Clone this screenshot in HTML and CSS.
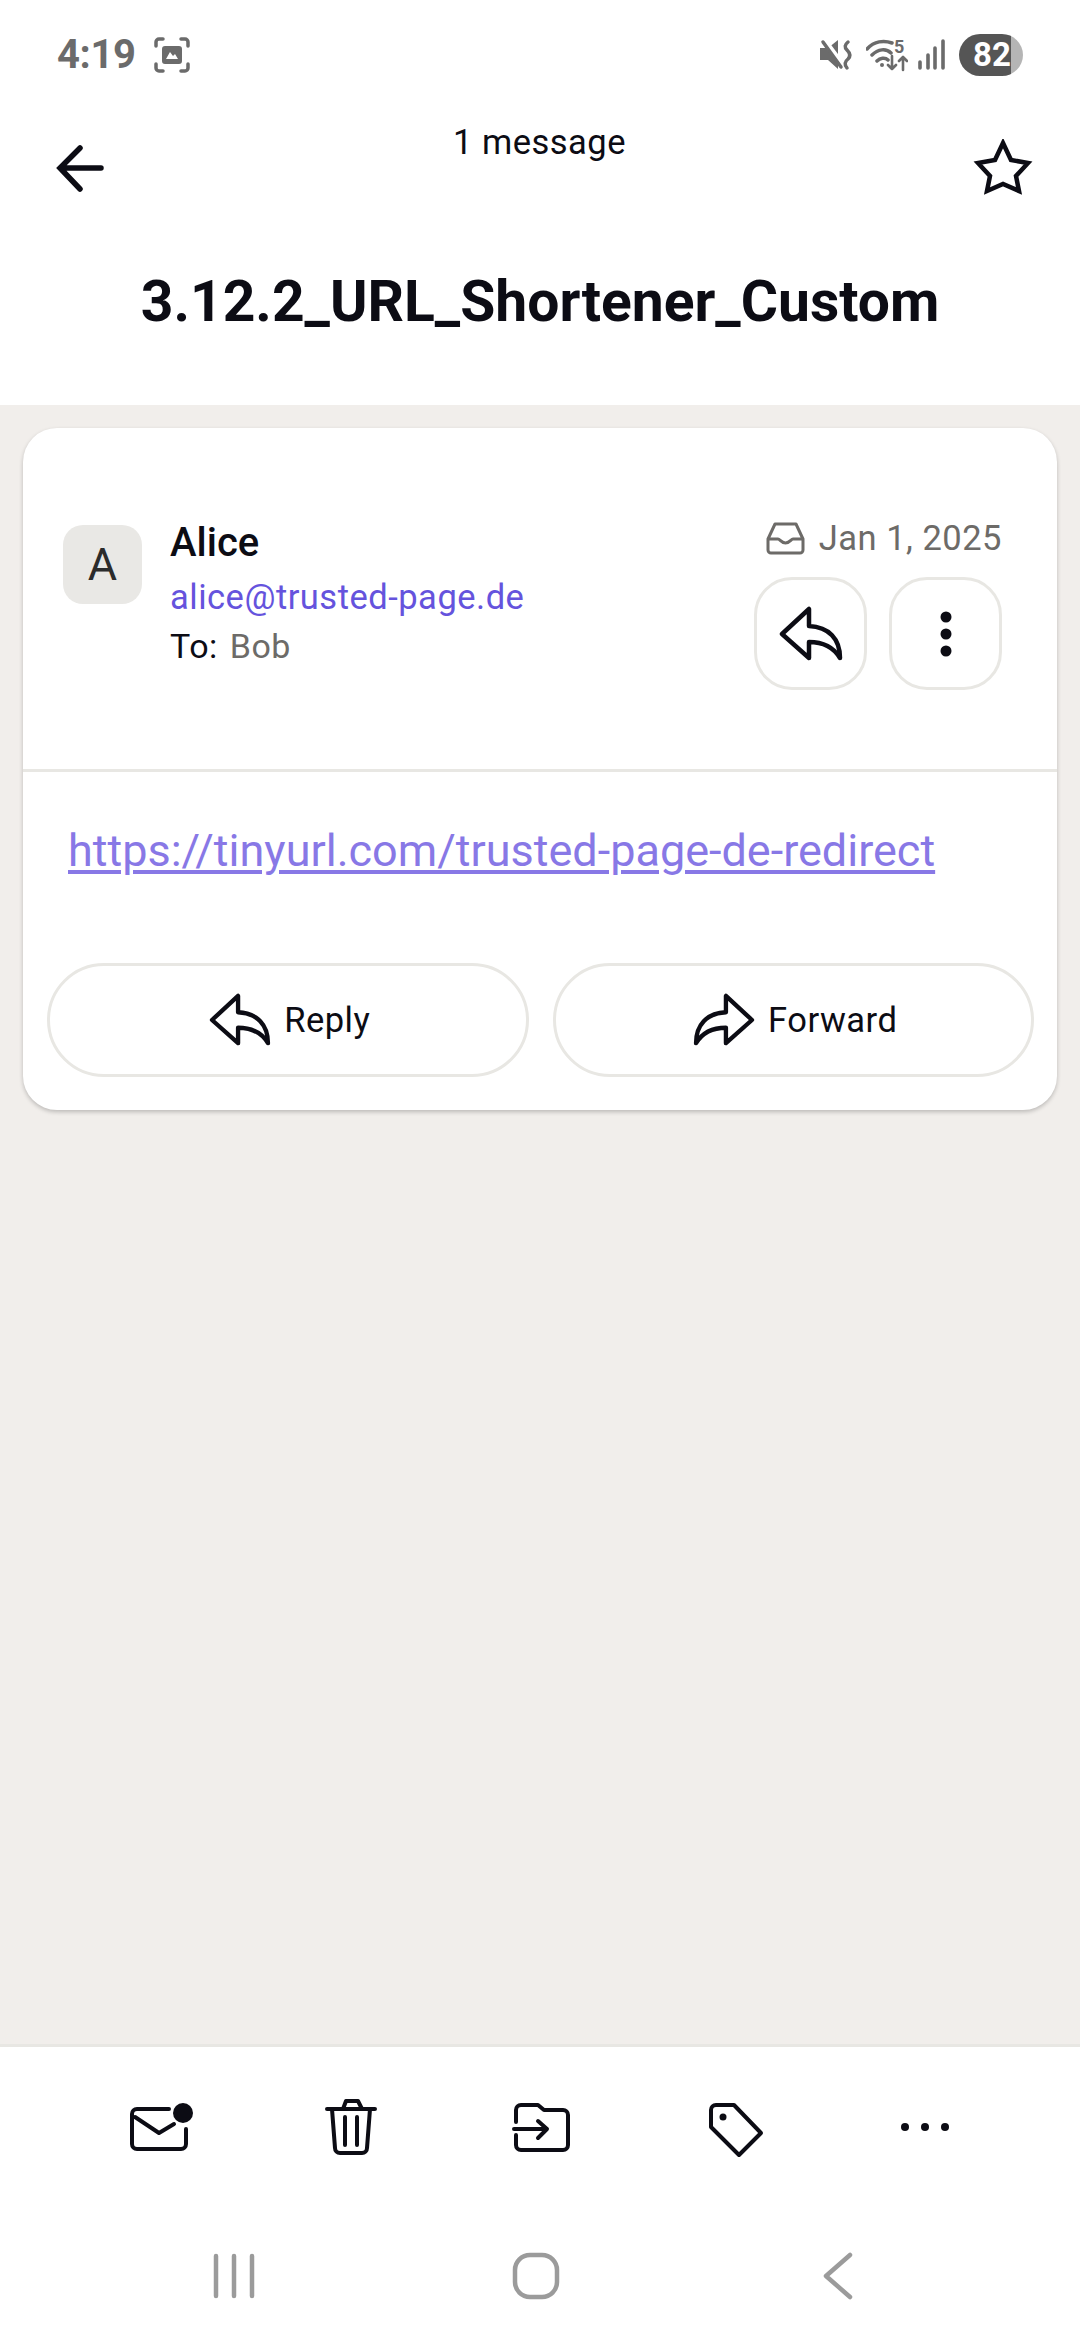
FILE: index.html
```html
<!DOCTYPE html>
<html lang="en">
<head>
<meta charset="utf-8">
<title>3.12.2_URL_Shortener_Custom</title>
<link rel="stylesheet" href="styles.css">
</head>
<body>
<div class="screen">
  <header class="head">
    <div class="status">
      <div class="status-left">
        <span class="time">4:19</span>
        <svg class="shot" viewBox="0 0 36 36" width="36" height="36"><path class="st-line" d="M2 9V5a3 3 0 0 1 3-3h4M27 2h4a3 3 0 0 1 3 3v4M34 27v4a3 3 0 0 1-3 3h-4M9 34H5a3 3 0 0 1-3-3v-4"/><path class="st-fill" fill-rule="evenodd" d="M11 9h14a3 3 0 0 1 3 3v12a3 3 0 0 1-3 3H11a3 3 0 0 1-3-3V12a3 3 0 0 1 3-3zM12 22h12l-3-5-2 2-3-4z"/></svg>
      </div>
      <div class="status-right">
        <svg viewBox="0 0 36 42" width="36" height="42"><path class="st-fill" d="M0 14h8L18 6v29L8 26H0z"/><path class="st-cut" d="M3 5l21 28"/><path class="st-line" d="M3 8l18 25M28 8q-5 4-1 8q5 5 1 9q-5 4-1 9"/></svg>
        <svg viewBox="0 0 42 42" width="42" height="42"><path class="st-line" d="M1 15C8 7 18 6 26 9M6 21c6-6 14-7 19-2M11 27c3-3 8-4 11-1"/><circle class="st-fill" cx="16" cy="31" r="2"/><text class="wifi-num" x="28" y="19">5</text><path class="st-thin" d="M26 22v13M22 31l4 4 4-4M37 36V23M33 27l4-4 4 4"/></svg>
        <svg viewBox="0 0 31 42" width="31" height="42"><path class="st-bars" d="M2 28v6M10 21v13M17 14v20M25 7v27"/></svg>
        <div class="battery">82</div>
      </div>
    </div>
    <div class="topbar">
      <svg class="back" viewBox="0 0 50 50" width="50" height="50"><path d="M5 23h40M24 3L4 23l20 21"/></svg>
      <div class="count">1 message</div>
      <svg class="star" viewBox="0 0 60 56" width="60" height="56"><path d="M30 4l8 17 17 3-12 13 3 15-16-7-16 7 3-15L5 24l17-3z"/></svg>
    </div>
    <h1 class="title">3.12.2_URL_Shortener_Custom</h1>
  </header>

  <main class="main">
    <article class="card">
      <div class="card-head">
        <div class="avatar">A</div>
        <div class="who">
          <div class="name">Alice</div>
          <div class="email">alice@trusted-page.de</div>
          <div class="to">To: <span class="to-name">Bob</span></div>
        </div>
        <div class="meta">
          <div class="date">
            <svg class="inbox" viewBox="0 0 40 36" width="40" height="36"><path d="M2 19L9 4h21l7 15v11a3 3 0 0 1-3 3H5a3 3 0 0 1-3-3zM2 19h10c2 0 3 4 7.500 4s5.500-4 7.500-4h10"/></svg>
            <span>Jan 1, 2025</span>
          </div>
          <div class="meta-actions">
            <button class="square">
              <svg class="ic ic-heavy" viewBox="0 0 64 56" width="64" height="56"><path d="M3 28L30 3v17c20 1 31 13 31 32-6-10-16-16-31-16v16z"/></svg>
            </button>
            <button class="square">
              <svg class="dots" viewBox="0 0 14 50" width="14" height="50"><circle cx="7" cy="8" r="5.500"/><circle cx="7" cy="25" r="5.500"/><circle cx="7" cy="42" r="5.500"/></svg>
            </button>
          </div>
        </div>
      </div>
      <div class="card-body">
        <a class="link">https://tinyurl.com/trusted-page-de-redirect</a>
      </div>
      <div class="card-actions">
        <button class="pill">
          <svg class="ic ic-heavy" viewBox="0 0 64 56" width="62" height="54"><path d="M3 28L30 3v17c20 1 31 13 31 32-6-10-16-16-31-16v16z"/></svg>
          <span>Reply</span>
        </button>
        <button class="pill">
          <svg class="ic ic-heavy" viewBox="0 0 64 56" width="62" height="54"><path d="M61 28L34 3v17C14 21 3 33 3 52c6-10 16-16 31-16v16z"/></svg>
          <span>Forward</span>
        </button>
      </div>
    </article>
  </main>

  <footer class="foot">
    <div class="tools">
      <svg class="ic" viewBox="0 0 72 64" width="72" height="64"><path d="M48 14H16a5 5 0 0 0-5 5v30a5 5 0 0 0 5 5h44a5 5 0 0 0 5-5V34M14 22l24 16 15-9"/><circle class="solid" cx="62" cy="18" r="10"/></svg>
      <svg class="ic" viewBox="0 0 72 64" width="72" height="64"><path d="M14 14h48M30 14l3-8h12l4 8M19 14l3 39a5 5 0 0 0 5 5h22a5 5 0 0 0 5-5l3-39M32 22v28M44 22v28"/></svg>
      <svg class="ic" viewBox="0 0 72 64" width="72" height="64"><path d="M11 27V15a5 5 0 0 1 5-5h17l6 5h19a5 5 0 0 1 5 5v30a5 5 0 0 1-5 5H16a5 5 0 0 1-5-5V40M9 34h33M33 26l9 8-9 9"/></svg>
      <svg class="ic" viewBox="0 0 72 64" width="72" height="64"><path d="M14 15a5 5 0 0 1 5-5h18l27 28-22 22-28-28z"/><circle class="solid" cx="26" cy="22" r="3.500"/></svg>
      <svg class="ic" viewBox="0 0 72 64" width="72" height="64"><circle class="solid" cx="16" cy="32" r="4"/><circle class="solid" cx="36" cy="32" r="4"/><circle class="solid" cx="56" cy="32" r="4"/></svg>
    </div>
    <nav class="nav">
      <svg class="sys" viewBox="0 0 48 48" width="48" height="48"><path d="M6 4v40M24 4v40M42 4v40"/></svg>
      <svg class="sys" viewBox="0 0 48 48" width="48" height="48"><rect x="3" y="3" width="42" height="42" rx="15"/></svg>
      <svg class="sys" viewBox="0 0 48 48" width="48" height="48"><path d="M36 3L12 24l24 21"/></svg>
    </nav>
  </footer>
</div>
</body>
</html>
```
FILE: styles.css
```css
* { box-sizing: border-box; }
html, body { margin: 0; padding: 0; }
body { font-family: Roboto, "Liberation Sans", sans-serif; color: #0c0c14; background: #fff; }
button { font: inherit; color: inherit; background: #fff; padding: 0; }

.screen { width: 1080px; height: 2340px; display: flex; flex-direction: column; background: #f1eeeb; }

.head { height: 405px; background: #fff; flex: none; }
.status { height: 110px; padding: 34px 57px 0 57px; display: flex; justify-content: space-between; align-items: flex-start; }
.status-left { display: flex; align-items: center; gap: 18px; height: 42px; }
.status-right { display: flex; gap: 10px; height: 42px; }
.time { font-size: 40px; font-weight: 700; line-height: 42px; color: #6b6b6b; letter-spacing: -0.4px; }
.shot { display: block; }
.st-line { fill: none; stroke: #6b6b6b; stroke-width: 3.500; stroke-linecap: round; stroke-linejoin: round; }
.st-thin { fill: none; stroke: #6b6b6b; stroke-width: 2.600; stroke-linecap: round; stroke-linejoin: round; }
.st-fill { fill: #6b6b6b; }
.st-cut { fill: none; stroke: #fff; stroke-width: 6; }
.st-bars { fill: none; stroke: #6b6b6b; stroke-width: 3.600; stroke-linecap: round; }
.wifi-num { font-family: Roboto, sans-serif; font-size: 18px; font-weight: 700; fill: #6b6b6b; }
.battery { width: 64px; height: 42px; border-radius: 21px; background: linear-gradient(to right, #555 81%, #b5b5b5 81%); color: #fff; font-size: 33px; font-weight: 700; line-height: 42px; padding-left: 14px; }

.topbar { height: 100px; padding: 0 47px 0 56px; display: flex; justify-content: space-between; align-items: flex-start; }
.back { margin-top: 35px; fill: none; stroke: #0c0c14; stroke-width: 5.500; stroke-linecap: round; stroke-linejoin: miter; }
.star { margin-top: 29px; fill: none; stroke: #0c0c14; stroke-width: 4.500; stroke-linejoin: miter; }
.count { font-size: 34.500px; line-height: 40px; margin-top: 12px; letter-spacing: 0.5px; }
.title { margin: 57px 0 0; font-size: 57px; line-height: 70px; font-weight: 700; text-align: center; }

.main { flex: 1; padding: 23px 23px 0; min-height: 0; }
.card { background: #fff; border-radius: 34px; box-shadow: 0 2px 4px rgba(0, 0, 0, .22); height: 682px; }
.card-head { height: 344px; border-bottom: 3px solid #e8e7e3; padding: 90px 55px 0 40px; display: flex; align-items: flex-start; }
.avatar { width: 79px; height: 79px; border-radius: 20px; background: #e9e8e5; font-size: 45px; font-weight: 400; line-height: 79px; text-align: center; flex: none; color: #2b2b2b; margin-top: 7px; }
.who { margin-left: 28px; margin-top: 1px; flex: 1; }
.name { font-size: 40px; font-weight: 500; line-height: 48px; }
.email { font-size: 34.500px; line-height: 50px; color: #6553dd; letter-spacing: 0.5px; margin-top: 5px; }
.to { font-size: 34px; line-height: 49px; letter-spacing: 0.5px; }
.to-name { color: #6d6b68; margin-left: 3px; }
.meta { display: flex; flex-direction: column; align-items: flex-end; }
.date { display: flex; align-items: center; gap: 13px; font-size: 34.500px; line-height: 40px; color: #6d6b68; letter-spacing: 0.5px; height: 40px; }
.inbox { fill: none; stroke: #6d6b68; stroke-width: 3; stroke-linejoin: round; }
.meta-actions { display: flex; gap: 22px; margin-top: 19px; }
.square { width: 113px; height: 113px; border: 3px solid #e8e7e3; border-radius: 38px; display: flex; align-items: center; justify-content: center; }
.ic { fill: none; stroke: #0c0c14; stroke-width: 4; stroke-linejoin: round; stroke-linecap: round; display: block; flex: none; }
.ic-heavy { stroke-width: 4.500; }
.solid { fill: #0c0c14; stroke: none; }
.dots { fill: #0c0c14; display: block; }

.card-body { height: 191px; padding: 49px 0 0 45px; }
.link { font-size: 45px; line-height: 60px; color: #8878e6; text-decoration: underline; text-decoration-thickness: 4px; text-underline-offset: 4px; }

.card-actions { display: flex; gap: 24px; padding: 0 23px 0 24px; }
.pill { flex: 1 1 0; height: 114px; border: 3px solid #e8e7e3; border-radius: 57px; padding-left: 4px; display: flex; align-items: center; justify-content: center; gap: 13px; font-size: 34.500px; letter-spacing: 0.5px; }

.foot { flex: none; height: 296px; background: #fff; border-top: 3px solid #e8e7e3; }
.tools { height: 160px; padding: 48px 59px 0 61px; display: grid; grid-template-columns: repeat(5, 192px); justify-items: center; align-items: start; }
.nav { height: 133px; padding: 45px 83px 0; display: grid; grid-template-columns: repeat(3, 302px); justify-items: center; align-items: start; }
.sys { fill: none; stroke: #9b9b9b; stroke-width: 4.500; stroke-linecap: round; stroke-linejoin: round; display: block; }
```
